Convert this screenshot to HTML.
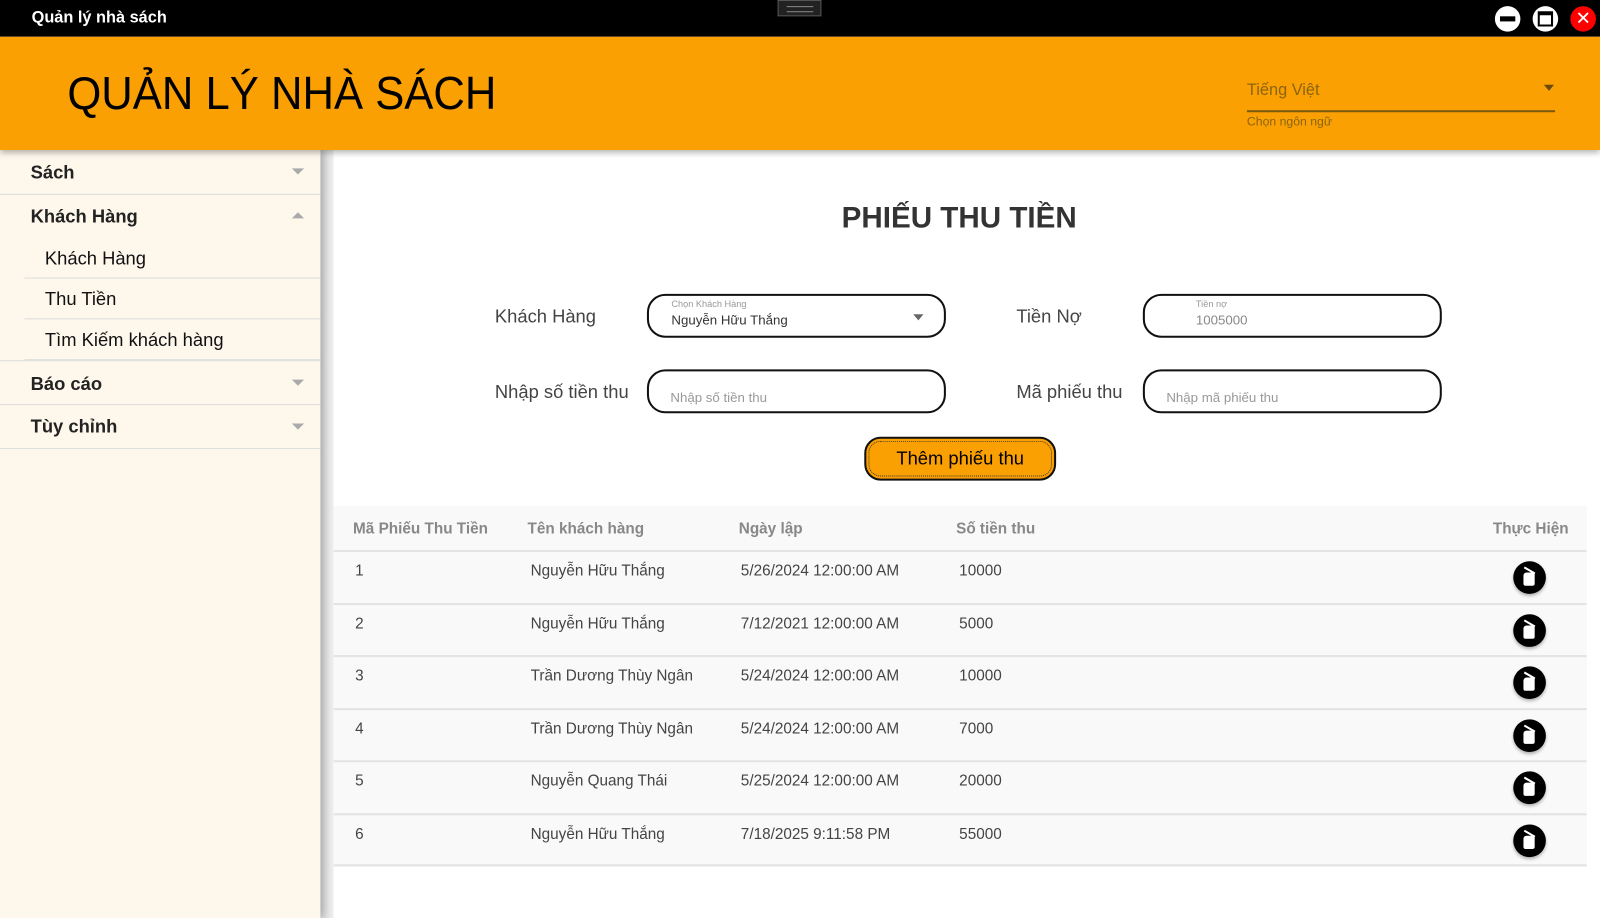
<!DOCTYPE html>
<html><head><meta charset="utf-8"><style>
*{box-sizing:border-box;margin:0;padding:0}
body{width:1600px;height:900px;overflow:hidden;background:#fff;font-family:"Liberation Sans",sans-serif;position:relative}
#w{position:absolute;left:0;top:0;width:1568px;height:882px;transform:scale(1.0204);transform-origin:0 0}
.tb{position:absolute;left:0;top:0;width:1568px;height:36px;background:#000}
.tb .t{position:absolute;left:31px;top:9px;color:#fff;font-weight:bold;font-size:16px}
.grip{position:absolute;left:762px;top:0;width:43px;height:16px;border:1px solid #555;background:#222}
.grip:after{content:"";position:absolute;left:8px;top:5px;width:26px;height:4px;border-top:1px solid #888;border-bottom:1px solid #888}
.cb{position:absolute;top:6px;width:25px;height:25px;border-radius:50%;background:#fff}
.hd{position:absolute;left:0;top:36px;width:1568px;height:111px;background:#fba003;box-shadow:0 3px 6px rgba(0,0,0,.3);z-index:2}
.hd h1{position:absolute;left:66px;top:30px;font-weight:normal;font-size:45px;color:#000;transform:scaleX(.95);transform-origin:left}
.lang{position:absolute;left:1222px;top:44px;width:302px;height:30px;border-bottom:2px solid #7a5a10;color:#8a6410;font-size:16px}
.lang:after{content:"";position:absolute;right:1px;top:3px;border:5px solid transparent;border-top:6px solid #6a4c08}
.lh{position:absolute;left:1222px;top:76px;color:#8a6410;font-size:12px}
.sb{position:absolute;left:0;top:147px;width:314px;height:753px;background:#fdf7ec;box-shadow:3px 0 8px rgba(0,0,0,.25);z-index:1}
.it{position:absolute;left:0;width:314px;border-bottom:1px solid #ddd;font-size:18px;font-weight:bold;color:#222;padding-left:30px}
.it.s{font-weight:normal;left:24px;width:290px;padding-left:20px;color:#111}
.ar{position:absolute;right:16px;top:18px;border:6px solid transparent;border-top:6px solid #aaa}
.ar.u{border-top:6px solid transparent;border-bottom:6px solid #aaa;top:11px}
.main{position:absolute;left:314px;top:147px;width:1286px;height:753px;background:linear-gradient(90deg,#ddd,#eee 13px,#fff 13px)}
.card{position:absolute;left:327px;top:165px;width:1241px;height:330px;background:#fff}
h2{position:absolute;left:0;width:1226px;top:33px;text-align:center;font-size:29px;color:#333;font-weight:bold}
.lb{position:absolute;font-size:18px;color:#444}
.in{position:absolute;width:293px;height:43px;border:2px solid #111;border-radius:18px;background:#fff}
.in .sm{position:absolute;left:22px;top:3px;font-size:9px;color:#999}
.in .v{position:absolute;left:22px;top:16px;font-size:13px;color:#333}
.in .p{position:absolute;left:21px;top:16px;font-size:13px;color:#999}
.btn{position:absolute;left:520px;top:263px;width:188px;height:43px;border:2px solid #111;border-radius:16px;background:#fba003;outline:1px dotted #333;outline-offset:-5px;text-align:center;line-height:39px;font-size:18px;color:#000}
.tbl{position:absolute;left:327px;top:496px;width:1228px;height:354px;background:#f9f9f9}
.th{position:absolute;top:14px;font-size:15px;color:#888;font-weight:bold}
.row{position:absolute;left:0;width:1228px;height:52px;border-top:2px solid #e3e3e3}
.row span{position:absolute;top:10px;font-size:15px;color:#444}
.del{position:absolute;left:1156px;top:9px;width:32px;height:32px;border-radius:50%;background:#000;box-shadow:0 2px 3px rgba(0,0,0,.3)}
.del:before{content:"";position:absolute;left:10px;top:11px;width:11px;height:13px;background:#fff;border-radius:3px 0 2px 2px}
.del:after{content:"";position:absolute;left:10px;top:8px;width:12px;height:2px;background:#fff;transform:rotate(30deg)}
</style></head><body><div id="w">
<div class="tb"><div class="t">Quản lý nhà sách</div><div class="grip"></div>
<div class="cb" style="left:1465px"><div style="position:absolute;left:5px;top:10px;width:15px;height:5px;background:#000"></div></div>
<div class="cb" style="left:1502px"><div style="position:absolute;left:5px;top:5px;width:15px;height:15px;border:2px solid #000;border-top-width:4px"></div></div>
<div class="cb" style="left:1539px;background:#f00;color:#fff;text-align:center;line-height:25px;font-size:18px">✕</div>
</div>
<div class="hd"><h1>QUẢN LÝ NHÀ SÁCH</h1><div class="lang">Tiếng Việt</div><div class="lh">Chọn ngôn ngữ</div></div>
<div class="sb">
<div class="it" style="top:0;height:44px;line-height:44px">Sách<i class="ar"></i></div>
<div class="it" style="top:44px;height:42px;line-height:42px;border:none">Khách Hàng<i class="ar u"></i></div>
<div class="it s" style="top:86px;height:40px;line-height:40px">Khách Hàng</div>
<div class="it s" style="top:126px;height:40px;line-height:40px">Thu Tiền</div>
<div class="it s" style="top:166px;height:40px;line-height:40px">Tìm Kiếm khách hàng</div>
<div class="it" style="top:206px;height:44px;line-height:44px;border-top:1px solid #ddd">Báo cáo<i class="ar"></i></div>
<div class="it" style="top:250px;height:43px;line-height:43px">Tùy chỉnh<i class="ar"></i></div>
</div>
<div class="main"></div>
<div class="card">
<h2>PHIẾU THU TIỀN</h2>
<div class="lb" style="left:158px;top:135px">Khách Hàng</div>
<div class="in" style="left:307px;top:123px"><div class="sm">Chọn Khách Hàng</div><div class="v">Nguyễn Hữu Thắng</div><div style="position:absolute;right:20px;top:18px;border:5px solid transparent;border-top:6px solid #666"></div></div>
<div class="lb" style="left:669px;top:135px">Tiền Nợ</div>
<div class="in" style="left:793px;top:123px"><div class="sm" style="left:50px">Tiền nợ</div><div class="v" style="left:50px;color:#888">1005000</div></div>
<div class="lb" style="left:158px;top:209px">Nhập số tiền thu</div>
<div class="in" style="left:307px;top:197px"><div class="p" style="top:18px">Nhập số tiền thu</div></div>
<div class="lb" style="left:669px;top:209px">Mã phiếu thu</div>
<div class="in" style="left:793px;top:197px"><div class="p" style="top:18px">Nhập mã phiếu thu</div></div>
<div class="btn">Thêm phiếu thu</div>
</div>
<div class="tbl">
<div class="th" style="left:19px">Mã Phiếu Thu Tiền</div>
<div class="th" style="left:190px">Tên khách hàng</div>
<div class="th" style="left:397px">Ngày lập</div>
<div class="th" style="left:610px">Số tiền thu</div>
<div class="th" style="left:1136px">Thực Hiện</div>
<div class="row" style="top:43px"><span style="left:21px">1</span><span style="left:193px">Nguyễn Hữu Thắng</span><span style="left:399px">5/26/2024 12:00:00 AM</span><span style="left:613px">10000</span><i class="del"></i></div>
<div class="row" style="top:95px"><span style="left:21px">2</span><span style="left:193px">Nguyễn Hữu Thắng</span><span style="left:399px">7/12/2021 12:00:00 AM</span><span style="left:613px">5000</span><i class="del"></i></div>
<div class="row" style="top:146px"><span style="left:21px">3</span><span style="left:193px">Trần Dương Thùy Ngân</span><span style="left:399px">5/24/2024 12:00:00 AM</span><span style="left:613px">10000</span><i class="del"></i></div>
<div class="row" style="top:198px"><span style="left:21px">4</span><span style="left:193px">Trần Dương Thùy Ngân</span><span style="left:399px">5/24/2024 12:00:00 AM</span><span style="left:613px">7000</span><i class="del"></i></div>
<div class="row" style="top:249px"><span style="left:21px">5</span><span style="left:193px">Nguyễn Quang Thái</span><span style="left:399px">5/25/2024 12:00:00 AM</span><span style="left:613px">20000</span><i class="del"></i></div>
<div class="row" style="top:301px;border-bottom:2px solid #e3e3e3"><span style="left:21px">6</span><span style="left:193px">Nguyễn Hữu Thắng</span><span style="left:399px">7/18/2025 9:11:58 PM</span><span style="left:613px">55000</span><i class="del"></i></div>
</div>
</div></body></html>
